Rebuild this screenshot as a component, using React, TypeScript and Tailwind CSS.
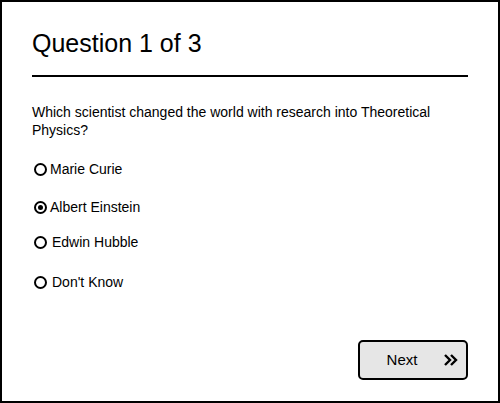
import React, { useState } from 'react';

const options = ['Marie Curie', 'Albert Einstein', 'Edwin Hubble', "Don't Know"];
// gaps between rows are uneven in the reference
const rowSpacing = ['mt-[21px]', 'mt-[20px]', 'mt-[17px]', 'mt-[22px]'];
const labelIndent = ['ml-[3px]', 'ml-[3px]', 'ml-[5px]', 'ml-[5px]'];

function Radio({ checked }: { checked: boolean }) {
  return (
    <span className="flex h-[13px] w-[13px] shrink-0 items-center justify-center rounded-full border-2 border-black bg-white">
      {checked && <span className="h-[5px] w-[5px] rounded-full bg-black" />}
    </span>
  );
}

export default function App() {
  const [selected, setSelected] = useState(1);

  return (
    <div className="flex h-[403px] w-[500px] flex-col border-2 border-black bg-white px-[30px] pt-[26px] font-['Liberation_Sans',Arial,sans-serif] text-black">
      <h1 className="text-[25px] leading-[30px]">Question 1 of 3</h1>
      <div className="mt-[17px] h-[2px] w-full bg-black" />

      <p className="mt-[26px] text-[14px] leading-[18px]">
        Which scientist changed the world with research into Theoretical Physics?
      </p>

      <div className="flex flex-col">
        {options.map((label, i) => (
          <button
            key={label}
            onClick={() => setSelected(i)}
            className={`flex items-center pl-[2px] text-left text-[14px] leading-[18px] ${rowSpacing[i]}`}
          >
            <Radio checked={selected === i} />
            <span className={labelIndent[i]}>{label}</span>
          </button>
        ))}
      </div>

      <div className="mt-auto mb-[21px] flex justify-end">
        <button className="relative flex h-[40px] w-[110px] items-center justify-center rounded-[5px] border-2 border-black bg-[#e6e6e6] text-[15px]">
          <span className="-ml-[22px]">Next</span>
          <svg
            className="absolute right-[7px] top-1/2 -translate-y-1/2"
            width="16"
            height="14"
            viewBox="0 0 16 14"
            fill="none"
            stroke="black"
            strokeWidth="2.4"
          >
            <path d="M2 2l5 5-5 5M8 2l5 5-5 5" />
          </svg>
        </button>
      </div>
    </div>
  );
}
